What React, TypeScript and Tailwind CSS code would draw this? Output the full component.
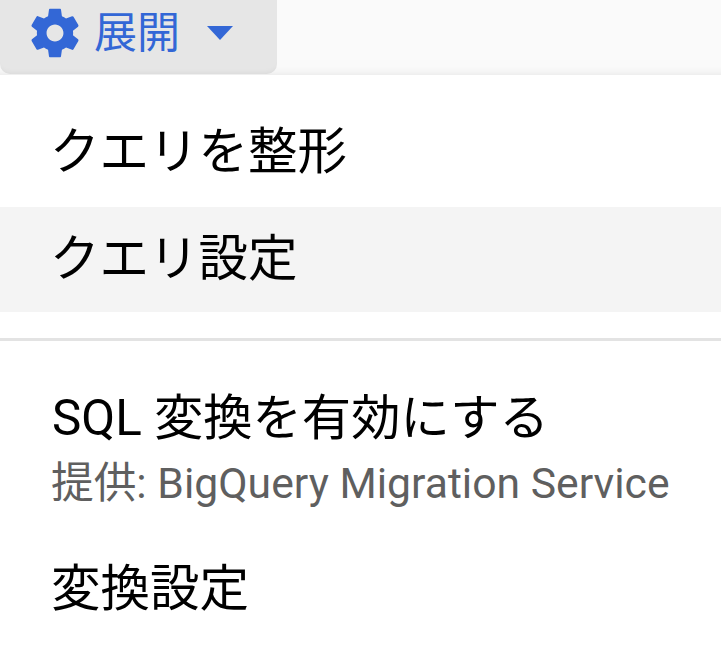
import React from "react";

function Gear() {
  return (
    <svg viewBox="0 0 24 24" className="w-[58px] h-[58px] fill-[#3367d6] shrink-0">
      <path d="M19.43 12.98c.04-.32.07-.64.07-.98s-.03-.66-.07-.98l2.11-1.65c.19-.15.24-.42.12-.64l-2-3.46c-.12-.22-.39-.3-.61-.22l-2.49 1c-.52-.4-1.08-.73-1.69-.98l-.38-2.65C14.46 2.18 14.25 2 14 2h-4c-.25 0-.46.18-.49.42l-.38 2.65c-.61.25-1.17.59-1.69.98l-2.49-1c-.23-.09-.49 0-.61.22l-2 3.46c-.13.22-.07.49.12.64l2.11 1.65c-.04.32-.07.65-.07.98s.03.66.07.98l-2.11 1.65c-.19.15-.24.42-.12.64l2 3.46c.12.22.39.3.61.22l2.49-1c.52.4 1.08.73 1.69.98l.38 2.65c.03.24.24.42.49.42h4c.25 0 .46-.18.49-.42l.38-2.65c.61-.25 1.17-.59 1.69-.98l2.49 1c.23.09.49 0 .61-.22l2-3.46c.12-.22.07-.49-.12-.64l-2.11-1.65zM12 15.5c-1.93 0-3.5-1.57-3.5-3.5s1.57-3.5 3.5-3.5 3.5 1.57 3.5 3.5-1.57 3.5-3.5 3.5z" />
    </svg>
  );
}

export default function App() {
  const font = "font-['Roboto','Noto_Sans_CJK_JP',sans-serif]";
  return (
    <div className={`w-[721px] h-[664px] overflow-hidden bg-white ${font}`}>
      <div className="h-[75px] bg-[#fafafa] shadow-[inset_0_-10px_10px_-10px_rgba(0,0,0,0.1)]">
        <div className="w-[277px] h-[74px] bg-[#e6e6e6] rounded-b-[10px] flex items-center pl-[26px] pb-[8px] text-[#3367d6] shadow-[inset_0_-6px_6px_-6px_rgba(0,0,0,0.08)]">
          <Gear />
          <span className="ml-[10px] text-[43px] leading-none">展開</span>
          <span className="ml-[27px] w-0 h-0 border-x-[13.5px] border-x-transparent border-t-[14px] border-t-[#3367d6]" />
        </div>
      </div>
      <div className="h-[132px] flex items-center pl-[50px] pt-[24px] text-[49.5px] leading-none text-black">クエリを整形</div>
      <div className="h-[105px] flex items-center pl-[50px] text-[49.5px] leading-none text-black bg-[#f4f4f4]">クエリ設定</div>
      <div className="mt-[26px] h-[3px] bg-[#e3e3e3]" />
      <div className="pl-[52px] mt-[53px] text-[49.3px] leading-none text-black">SQL 変換を有効にする</div>
      <div className="pl-[51px] mt-[19px] text-[42.7px] leading-none text-[#5f5f5f]">提供: BigQuery Migration Service</div>
      <div className="pl-[51px] mt-[60px] text-[49.5px] leading-none text-black">変換設定</div>
    </div>
  );
}
